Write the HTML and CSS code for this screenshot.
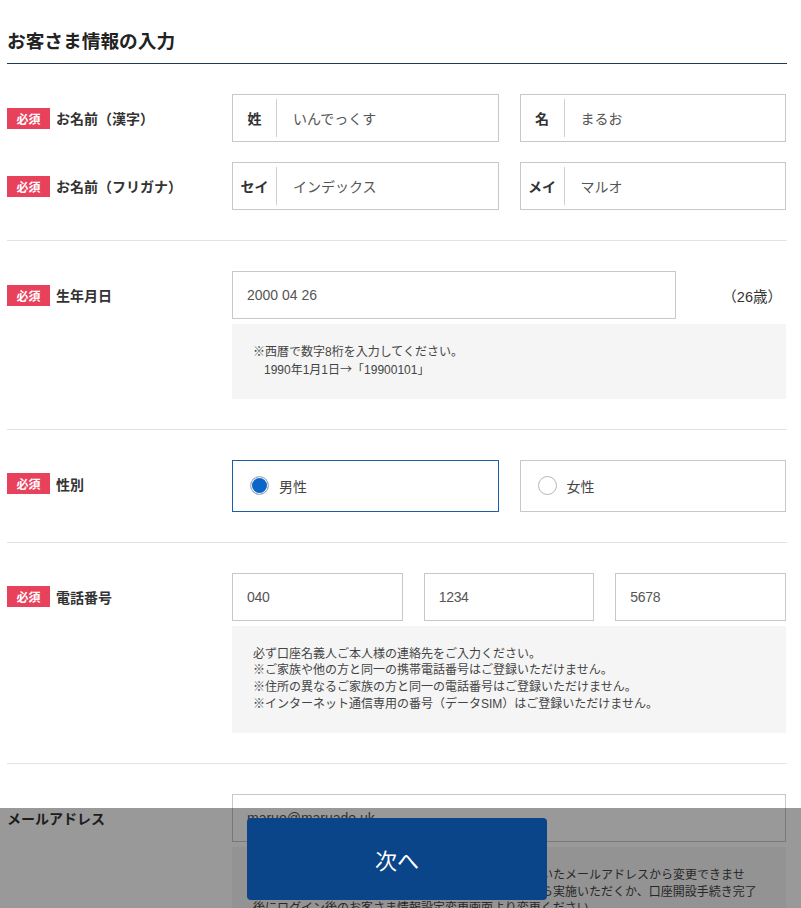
FILE: index.html
```html
<!DOCTYPE html>
<html lang="ja">
<head>
    <meta charset="UTF-8">
    <meta name="viewport" content="width=device-width, initial-scale=1.0">
    <title>お客さま情報の入力</title>
    <link rel="stylesheet" href="styles.css">
</head>
<body>
    <div class="page">
        <h1 class="page-title">お客さま情報の入力</h1>

        <div class="section">
            <div class="row">
                <div class="row-label"><span class="badge">必須</span>お名前（漢字）</div>
                <div class="pair">
                    <div class="field"><span class="field-prefix">姓</span><input type="text" class="has-prefix" value="いんでっくす"></div>
                    <div class="field"><span class="field-prefix">名</span><input type="text" class="has-prefix" value="まるお"></div>
                </div>
            </div>
            <div class="row">
                <div class="row-label"><span class="badge">必須</span>お名前（フリガナ）</div>
                <div class="pair">
                    <div class="field"><span class="field-prefix">セイ</span><input type="text" class="has-prefix" value="インデックス"></div>
                    <div class="field"><span class="field-prefix">メイ</span><input type="text" class="has-prefix" value="マルオ"></div>
                </div>
            </div>
        </div>

        <div class="section">
            <div class="row">
                <div class="row-label"><span class="badge">必須</span>生年月日</div>
                <div>
                    <div class="birth-line">
                        <div class="field birth-field"><input type="text" value="2000 04 26"></div>
                        <span class="age">（26歳）</span>
                    </div>
                    <div class="note">
                        ※西暦で数字8桁を入力してください。<br>
                        <span class="indent">1990年1月1日<span class="cjk">→</span>「19900101」</span>
                    </div>
                </div>
            </div>
        </div>

        <div class="section">
            <div class="row">
                <div class="row-label"><span class="badge">必須</span>性別</div>
                <div class="pair">
                    <label class="choice checked"><input type="radio" name="gender" checked><span>男性</span></label>
                    <label class="choice"><input type="radio" name="gender"><span>女性</span></label>
                </div>
            </div>
        </div>

        <div class="section">
            <div class="row">
                <div class="row-label"><span class="badge">必須</span>電話番号</div>
                <div>
                    <div class="triple">
                        <div class="field"><input type="text" class="num" value="040"></div>
                        <div class="field"><input type="text" class="num" value="1234"></div>
                        <div class="field"><input type="text" class="num" value="5678"></div>
                    </div>
                    <div class="note">
                        必ず口座名義人ご本人様の連絡先をご入力ください。<br>
                        ※ご家族や他の方と同一の携帯電話番号はご登録いただけません。<br>
                        ※住所の異なるご家族の方と同一の電話番号はご登録いただけません。<br>
                        ※インターネット通信専用の番号（データSIM）はご登録いただけません。
                    </div>
                </div>
            </div>
        </div>

        <div class="section last">
            <div class="row">
                <div class="row-label">メールアドレス</div>
                <div>
                    <div class="field"><input type="text" value="maruo@maruado.uk"></div>
                    <div class="note">
                        ※口座開設のお申込み手続き完了後は、ご登録いただいたメールアドレスから変更できませ<br>
                        ん。変更をご希望される場合は、お申し込みを最初から実施いただくか、口座開設手続き完了<br>
                        後にログイン後のお客さま情報設定変更画面より変更ください。
                    </div>
                </div>
            </div>
        </div>
    </div>

    <div class="action-bar">
        <button class="next-button">次へ</button>
    </div>
</body>
</html>
```

FILE: styles.css
```css
body {
    margin: 0;
    font-family: "Liberation Sans", "Noto Sans CJK JP", sans-serif;
    color: #333;
    background: #fff;
}

.page {
    width: 780px;
    margin-left: 7px;
    padding-bottom: 120px;
}

.page-title {
    margin: 29px 0 0;
    font-size: 18.7px;
    line-height: 26px;
    padding-bottom: 8px;
    border-bottom: 1px solid #1d3b58;
    color: #222;
}

.section {
    display: flex;
    flex-direction: column;
    gap: 20px;
    padding: 30px 0;
    border-bottom: 1px solid #e2e2e2;
}

.section.last {
    border-bottom: none;
}

.row {
    display: grid;
    grid-template-columns: 225px 554px;
}

.row-label {
    display: flex;
    align-items: center;
    gap: 6px;
    height: 48px;
    font-size: 14px;
    font-weight: bold;
    color: #333;
}

.badge {
    display: flex;
    align-items: center;
    justify-content: center;
    width: 43px;
    height: 21px;
    background: #e8415c;
    color: #fff;
    font-size: 12px;
    font-weight: bold;
}

.pair {
    display: grid;
    grid-template-columns: minmax(0, 1fr) minmax(0, 1fr);
    gap: 21px;
}

.triple {
    display: grid;
    grid-template-columns: repeat(3, minmax(0, 1fr));
    gap: 21px;
}

.field {
    display: flex;
    align-items: center;
    min-width: 0;
    height: 48px;
    box-sizing: border-box;
    border: 1px solid #c8c8c8;
    background: #fff;
}

.field-prefix {
    display: flex;
    align-items: center;
    justify-content: center;
    width: 43px;
    flex-shrink: 0;
    align-self: stretch;
    margin: 4px 0;
    border-right: 1px solid #cfcfcf;
    font-size: 14px;
    font-weight: bold;
    color: #333;
}

.field input {
    flex: 1;
    width: 100%;
    min-width: 0;
    height: 100%;
    box-sizing: border-box;
    border: 0;
    outline: 0;
    padding: 0 14px;
    background: transparent;
    font-family: inherit;
    font-size: 14px;
    color: #555;
}

.field input.has-prefix {
    padding-left: 16px;
}

.field input.num {
    letter-spacing: -0.3px;
}

.birth-line {
    display: flex;
    align-items: center;
}

.birth-field {
    width: 444px;
}

.age {
    margin-left: auto;
    margin-right: 4px;
    font-size: 14.5px;
    color: #333;
}

.note {
    margin-top: 5px;
    padding: 20px 21px;
    background: #f5f5f5;
    font-size: 12px;
    line-height: 1.4;
    color: #444;
}

.indent {
    padding-left: 11px;
}

.cjk {
    font-family: "Noto Sans CJK JP", sans-serif;
}

.choice {
    display: flex;
    align-items: center;
    gap: 10px;
    height: 52px;
    box-sizing: border-box;
    padding-left: 17px;
    border: 1px solid #c8c8c8;
    font-size: 14px;
    color: #444;
    cursor: pointer;
}

.choice.checked {
    border-color: #1a5ea6;
}

.choice input {
    appearance: none;
    -webkit-appearance: none;
    width: 19px;
    height: 19px;
    margin: 0;
    border: 1px solid #b8b8b8;
    border-radius: 50%;
    background: #fff;
}

.choice input:checked {
    background: #0a66c8;
    box-shadow: inset 0 0 0 1px #fff;
}

.action-bar {
    position: fixed;
    left: 0;
    right: 0;
    bottom: 0;
    height: 100px;
    box-sizing: border-box;
    padding: 10px 7px 0 0;
    display: flex;
    justify-content: center;
    align-items: flex-start;
    background: rgba(0, 0, 0, 0.4);
}

.next-button {
    width: 300px;
    height: 82px;
    border: none;
    border-radius: 4px;
    background: #0a4589;
    color: #fff;
    font-family: inherit;
    font-size: 22px;
    cursor: pointer;
}
```
